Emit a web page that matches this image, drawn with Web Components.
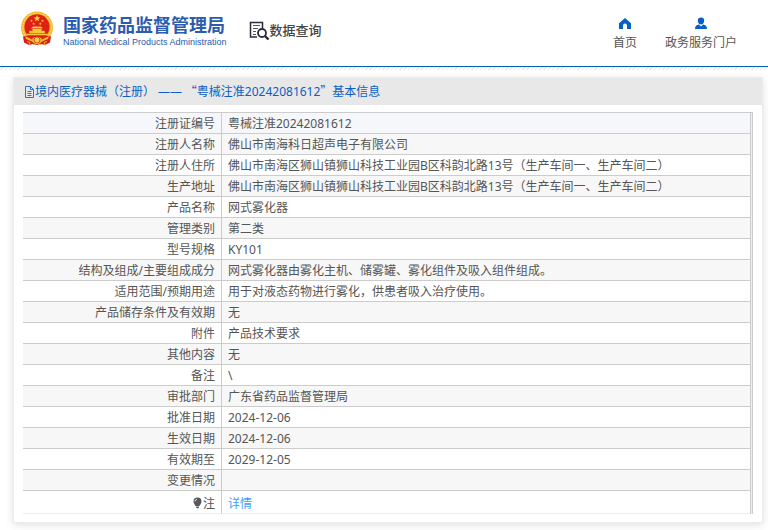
<!DOCTYPE html>
<html lang="zh-CN">
<head>
<meta charset="utf-8">
<meta name="viewport" content="width=device-width, initial-scale=1">
<title>国家药品监督管理局 数据查询</title>
<style>
body { margin: 0; background: #fff; color: #555; font: 12px/20px "Noto Sans", "Noto Sans CJK SC", sans-serif; }
.quote { font-family: "Noto Sans CJK SC", sans-serif; }
</style>
</head>
<body>
<site-header>
  <nav-item slot="nav" icon="home">首页</nav-item>
  <nav-item slot="nav" icon="user">政务服务门户</nav-item>
</site-header>
<main>
  <info-card>
    <span slot="title">境内医疗器械（注册） ——<span class="quote"> “</span>粤械注准20242081612<span class="quote">”</span>基本信息</span>
    <record-table></record-table>
  </info-card>
</main>
<script>
class ShadowElement extends HTMLElement {
  constructor() {
    super();
    this.attachShadow({ mode: "open" }).innerHTML = this.template();
  }
}

customElements.define("national-emblem", class extends ShadowElement {
  template() {
    return `<style>:host { display: block; width: 34px; height: 36px; } svg { display: block; }</style>
<svg width="34" height="36" viewBox="0 0 34 36" aria-hidden="true">
  <circle cx="17" cy="16.5" r="16" fill="#f0b92c"/>
  <circle cx="17" cy="16.5" r="14.3" fill="none" stroke="#ffda57" stroke-width="1.2" stroke-dasharray="2 1"/>
  <circle cx="17" cy="15.8" r="12.6" fill="#df1f18"/>
  <path d="M17 4l.9 2.3 2.5.1-2 1.5.7 2.4-2.1-1.4-2.1 1.4.7-2.4-2-1.5 2.5-.1z" fill="#ffd43a"/>
  <g fill="#f6bd36"><circle cx="11.5" cy="9.8" r="1"/><circle cx="22.5" cy="9.8" r="1"/><circle cx="13.7" cy="12.8" r="1"/><circle cx="20.3" cy="12.8" r="1"/></g>
  <path d="M11 17.5l2-2h8l2 2zM12.5 18h9v1.7h3.3v2.5H9.200v-2.500h3.300zM7 22.700h20v1.500H7z" fill="#f8c63b"/>
  <path d="M3 25.500l5-1 4 3 5-3 5 3 4-3 5 1-1 6-5 2.500-4-1-4 1-4-1-4 1-5-2.500z" fill="#d91e18"/>
  <path d="M5 25l7 3.500a5.300 4 0 0 1 10 0l7-3.500-1 3-6 2.500a5.500 4 0 0 1-10 0L6 28z" fill="#f3be35"/>
  <circle cx="17" cy="29" r="3" fill="#f9cf4a" stroke="#d33117" stroke-width=".8"/>
  <path d="M7 30.500l3 1-1 3M27 30.500l-3 1 1 3M13 33.500l4-1 4 1" stroke="#edaf2d" fill="none"/>
</svg>`;
  }
});

customElements.define("site-header", class extends ShadowElement {
  template() {
    return `<style>
:host { display: block; }
header { display: flex; align-items: flex-start; height: 66px; border-bottom: 1px solid #0061c2; padding: 0 31px 0 20px; }
.strip { height: 3px; background: repeating-linear-gradient(135deg, #fff 0 2px, #ebebe6 2px 3px); }
national-emblem { margin-top: 11px; }
.brand { margin: 13px 0 0 9px; color: #2b5cad; }
h1 { margin: 0; font-size: 18px; line-height: 24px; font-weight: 700; white-space: nowrap; }
.brand p { margin: 0; font: 400 9px/11px "Liberation Sans", sans-serif; white-space: nowrap; }
.query { display: flex; align-items: center; margin: 20px 0 0 22px; color: #444; font-size: 13px; font-weight: 500; white-space: nowrap; }
.query svg { flex: none; }
nav { display: flex; gap: 28px; margin: 16px 0 0 auto; }
</style>
<header>
  <national-emblem></national-emblem>
  <div class="brand"><h1>国家药品监督管理局</h1><p>National Medical Products Administration</p></div>
  <div class="query">
    <svg width="21" height="20" viewBox="0 0 21 20" fill="none" stroke="#2d2b3c" aria-hidden="true">
      <path d="M8 17H1.500V2.500h12V8" stroke-width="1.500"/>
      <path d="M4 5.500h7M4 8.500h5M4 11.500h3M4 14.500h3" stroke="#55535f"/>
      <circle cx="13" cy="13" r="4" stroke-width="1.800"/>
      <path d="M16 16l3.500 3.500" stroke-width="2.400"/>
    </svg><span>数据查询</span>
  </div>
  <nav><slot name="nav"></slot></nav>
</header>
<div class="strip"></div>`;
  }
});

customElements.define("nav-item", class extends ShadowElement {
  template() {
    return `<style>
:host { display: block; }
a { display: flex; flex-direction: column; align-items: center; color: #555; text-decoration: none; white-space: nowrap; line-height: 18px; }
svg { display: block; fill: #0761c5; margin-bottom: 3px; }
</style><a href="#"><svg width="14" height="15" viewBox="0 0 14 15" aria-hidden="true"><path/></svg><slot></slot></a>`;
  }
  connectedCallback() {
    const shapes = {
      home: "M7 2L1 7.200V13h4V9.500a2 2 0 0 1 4 0V13h4V7.200z",
      user: "M7 1.500a3.200 3.200 0 0 1 3.200 3.200C10.200 7 8.700 8.500 7 8.500S3.800 7 3.800 4.700A3.200 3.200 0 0 1 7 1.500zM1 13c0-3 1.500-4 4-4.500l2 2 2-2c2.500.5 4 1.500 4 4.500z"
    };
    this.shadowRoot.querySelector("path").setAttribute("d", shapes[this.getAttribute("icon")]);
  }
});

customElements.define("info-card", class extends ShadowElement {
  template() {
    return `<style>
:host { display: block; margin: 7px 5px 8px 13px; border: 1px solid #ebebf0; background: #fff; box-shadow: 0 2px 8px rgba(0,0,0,.12); }
h2 { display: flex; align-items: center; margin: 0; padding: 0 10px; height: 27px; background: #e8e8e8; color: #0a60c2; font-size: 12px; font-weight: 400; }
svg { flex: none; }
.body { padding: 7px 9px 8px; }
</style>
<h2><svg width="11" height="12" viewBox="0 0 11 12" fill="none" stroke="#2a70c8" aria-hidden="true"><path d="M1.500.5h5l3 3v8h-8zM6.500.5v3h3M3.500 5.500h4M3.500 7.500h4M3.500 9.500h4"/></svg><slot name="title"></slot></h2>
<div class="body"><slot></slot></div>`;
  }
});

customElements.define("record-table", class extends ShadowElement {
  template() {
    const rows = [
      ["注册证编号", "粤械注准20242081612"],
      ["注册人名称", "佛山市南海科日超声电子有限公司"],
      ["注册人住所", "佛山市南海区狮山镇狮山科技工业园B区科韵北路13号（生产车间一、生产车间二）"],
      ["生产地址", "佛山市南海区狮山镇狮山科技工业园B区科韵北路13号（生产车间一、生产车间二）"],
      ["产品名称", "网式雾化器"],
      ["管理类别", "第二类"],
      ["型号规格", "KY101"],
      ["结构及组成/主要组成成分", "网式雾化器由雾化主机、储雾罐、雾化组件及吸入组件组成。"],
      ["适用范围/预期用途", "用于对液态药物进行雾化，供患者吸入治疗使用。"],
      ["产品储存条件及有效期", "无"],
      ["附件", "产品技术要求"],
      ["其他内容", "无"],
      ["备注", "\\"],
      ["审批部门", "广东省药品监督管理局"],
      ["批准日期", "2024-12-06"],
      ["生效日期", "2024-12-06"],
      ["有效期至", "2029-12-05"],
      ["变更情况", ""]
    ];
    return `<style>
:host { display: block; border: 1px solid #ccc; border-width: 1px 1px 0 0; padding-right: 1px; background: #ebeef5; }
table { width: 100%; border-collapse: separate; border-spacing: 0; background: #fff; table-layout: fixed; border-right: 1px solid #ccc; }
col:first-child { width: 199px; }
th, td { padding: 2px 6px 0; height: 18px; line-height: 18px; font-weight: 400; border-bottom: 1px solid #ccc; }
th { text-align: right; border-right: 1px solid #ccc; }
td { text-align: left; }
tr:nth-child(even) { background: #f7f7f7; }
tr:first-child { background: #f5f7fb; }
tr:last-child > * { padding-top: 4px; border-bottom-color: #ebeef5; }
a { color: #409eff; text-decoration: none; }
svg { vertical-align: -1px; }
</style>
<table><colgroup><col><col></colgroup><tbody>
${rows.map(([name, value]) => `<tr><th scope="row">${name}</th><td>${value}</td></tr>`).join("")}
<tr><th scope="row"><svg width="11" height="12" viewBox="0 0 11 12" aria-hidden="true"><path d="M5.500.5a4 4 0 0 1 4 4c0 2-1.500 3-2 4.500h-4c-.5-1.500-2-2.500-2-4.500a4 4 0 0 1 4-4zM4 9.500h3v1L5.500 11.500 4 10.500z" fill="#58585c"/><path d="M3 4.500a2.500 2.500 0 0 1 2-2.300" stroke="#ddd" fill="none"/></svg>注</th><td><a href="#">详情</a></td></tr>
</tbody></table>`;
  }
});
</script>
</body>
</html>
